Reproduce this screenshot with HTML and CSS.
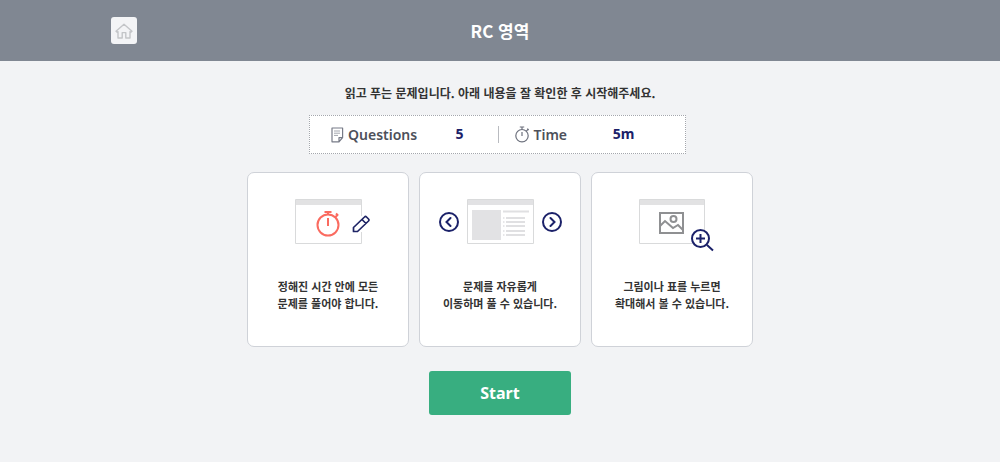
FILE: index.html
```html
<!DOCTYPE html>
<html lang="ko">
<head>
<meta charset="utf-8">
<meta name="viewport" content="width=device-width, initial-scale=1">
<title>RC 영역</title>
<link rel="stylesheet" href="styles.css">
</head>
<body>
<header class="topbar">
  <a class="home" href="#" aria-label="Home">
    <svg width="18" height="16" viewBox="0 0 18 16" fill="none" stroke="#c3c5c8" stroke-width="1.4" stroke-linejoin="round" stroke-linecap="round"><path d="M1 8.2 9 1.2l8 7-1.2 1L15 8.6V15h-4.2V9.6H7.2V15H3V8.6l-.8.6z"/></svg>
  </a>
  <h1 class="title">RC 영역</h1>
</header>
<main class="content">
  <p class="intro">읽고 푸는 문제입니다. 아래 내용을 잘 확인한 후 시작해주세요.</p>
  <dl class="summary">
    <div class="item">
      <dt class="label">
        <svg width="13" height="16" viewBox="0 0 13 16" fill="none" stroke="#777b87" stroke-width="1.2" stroke-linejoin="round"><path d="M1 1h10.6v9.6L8 14.8H1zM11.6 10.6H8v4.2"/><path d="M3 4h6M3 6.2h6M3 8.4h4" stroke="#a2a5ad" stroke-width="1"/></svg>
        Questions
      </dt>
      <dd class="value">5</dd>
    </div>
    <div class="item">
      <dt class="label">
        <svg width="15" height="17" viewBox="0 0 15 17" fill="none" stroke="#6d717d" stroke-width="1.2"><circle cx="7" cy="9.7" r="6.2"/><path d="M4.8 1h4.4M7 1v2.5M7 6v4M11.3 5.2l1.8-1.9M12.3 2.6l1.4 1.4"/></svg>
        Time
      </dt>
      <dd class="value">5m</dd>
    </div>
  </dl>
  <ul class="cards">
    <li class="card">
      <svg class="art" width="140" height="60" viewBox="0 0 140 60" fill="none">
        <path d="M37.500 7.500h66v44h-66z" fill="#fff" stroke="#d9dadb"/>
        <path d="M38 8h65v5H38z" fill="#e2e2e3"/>
        <path d="M99 24h12v16H95z" fill="#fff"/>
        <g stroke="#fa6b60" stroke-width="2"><circle cx="70" cy="33" r="10.500"/><path d="M66.500 20h7M70 20v3M70 26v8M77 25.500l3-3M78 21.500l2 2"/></g>
        <path d="M95.500 39.500v-4l11-10.500q1-1 2 0l2 2q1 1 0 2l-11 10.500zM104 27.500l4 4" stroke="#1e2465" stroke-width="1.700" stroke-linejoin="round"/>
      </svg>
      <p class="text">정해진 시간 안에 모든<br>문제를 풀어야 합니다.</p>
    </li>
    <li class="card">
      <svg class="art" width="140" height="60" viewBox="0 0 140 60" fill="none">
        <path d="M37.500 7.500h66v44h-66z" fill="#fff" stroke="#d9dadb"/>
        <path d="M38 8h65v5H38zM42 18h29v30H42z" fill="#e2e2e4"/>
        <path d="M73 19.500h26M76 26h19M76 30h19M76 34h19M76 39h19M76 43h19" stroke="#e0e0e2" stroke-width="2"/>
        <path d="M73 26h1.500M73 30h1.500M73 34h1.500M73 39h1.500M73 43h1.500" stroke="#e0e0e2" stroke-width="1.500"/>
        <g stroke="#1b2169" stroke-width="2"><circle cx="19" cy="30" r="9"/><circle cx="122" cy="30" r="9"/><path d="M20.500 26l-4 4 4 4M120.500 26l4 4-4 4" stroke-linecap="round"/></g>
      </svg>
      <p class="text">문제를 자유롭게<br>이동하며 풀 수 있습니다.</p>
    </li>
    <li class="card">
      <svg class="art" width="140" height="60" viewBox="0 0 140 60" fill="none">
        <path d="M37.500 7.500h65v44h-65z" fill="#fff" stroke="#d9dadb"/>
        <path d="M38 8h64v5H38z" fill="#e2e2e3"/>
        <g stroke="#8f9092" stroke-width="2"><path d="M58 21h23v20H58z"/><circle cx="71.500" cy="27" r="3"/><path d="M58 34l5-5 8 7 5-3 5 5"/></g>
        <path d="M93 40h12v14H93z" fill="#fff"/>
        <path d="M105 53l6 5.500M94 46.500h9M98.500 42v9" stroke="#1b2169" stroke-width="2"/><circle cx="98.500" cy="46.500" r="8.500" stroke="#1b2169" stroke-width="2"/>
      </svg>
      <p class="text">그림이나 표를 누르면<br>확대해서 볼 수 있습니다.</p>
    </li>
  </ul>
  <button class="start" type="button">Start</button>
</main>
</body>
</html>
```
FILE: styles.css
```css
* {
  box-sizing: border-box;
  margin: 0;
  padding: 0;
}

body {
  background: #f2f3f5;
  color: #333;
  font-family: "Noto Sans", "Noto Sans CJK KR", sans-serif;
}

.topbar {
  display: grid;
  grid-template-columns: 1fr auto 1fr;
  align-items: center;
  padding: 17px 11.1%;
  background: #808792;
}

.home {
  display: flex;
  align-items: center;
  justify-content: center;
  width: 26px;
  height: 27px;
  border-radius: 3px;
  background: #f3f4f6;
}

.title {
  color: #fff;
  font: 700 17px/27px "Noto Sans CJK KR", sans-serif;
}

.content {
  display: flex;
  flex-direction: column;
  align-items: center;
  padding: 22px 16px 24px;
}

.intro {
  font: 700 12px/20px "Noto Sans CJK KR", sans-serif;
}

.summary {
  display: grid;
  grid-template-columns: 1fr 1fr;
  width: 100%;
  max-width: 377px;
  margin: 12px 5px 0 0;
  padding: 10px 0;
  border: 1px dotted #a4a7ad;
  background: #fff;
  font-size: 14px;
  font-weight: 600;
  line-height: 16px;
}

.item {
  display: grid;
  grid-template-columns: 1fr 76px;
  padding-left: 21px;
}

.item + .item {
  grid-template-columns: auto 1fr;
  padding: 0 5px 0 16px;
  border-left: 1px solid #b9bbc0;
}

.label {
  display: flex;
  align-items: center;
  gap: 4px;
  color: #4d505a;
}

.value {
  color: #1b2169;
  font-weight: 700;
  text-align: center;
}

.cards {
  display: flex;
  flex-wrap: wrap;
  justify-content: center;
  gap: 10px;
  margin-top: 18px;
  list-style: none;
}

.card {
  display: flex;
  flex-direction: column;
  align-items: center;
  gap: 26px;
  width: 162px;
  padding: 19px 10px 34px;
  border: 1px solid #cfd2d8;
  border-radius: 7px;
  background: #fff;
}

.text {
  font: 700 11px/17px "Noto Sans CJK KR", sans-serif;
  text-align: center;
  white-space: nowrap;
}

.start {
  margin-top: 24px;
  padding: 10px 51px;
  border: 0;
  border-radius: 3px;
  background: #38ae80;
  color: #fff;
  font: 700 16px/24px "Noto Sans", sans-serif;
}
```
